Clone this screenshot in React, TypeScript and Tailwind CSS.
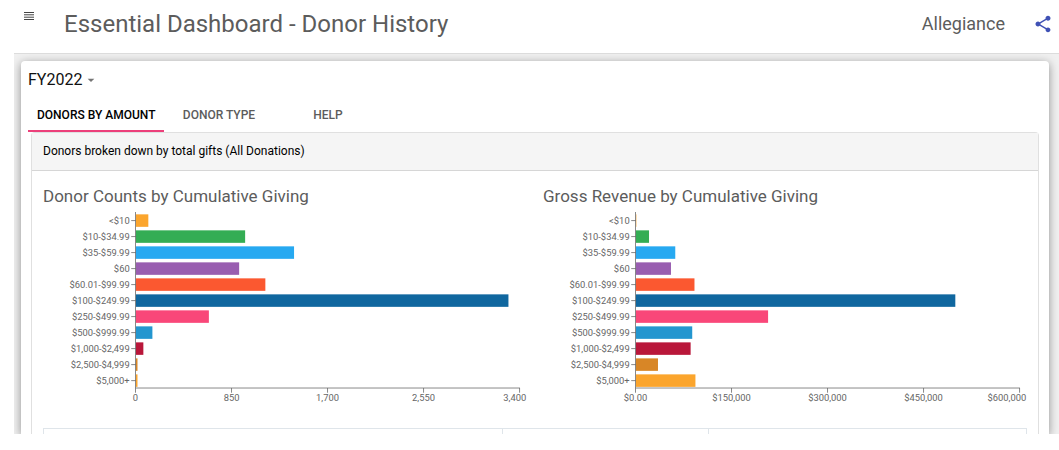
import { useState } from "react";
import { MdArrowDropDown, MdShare } from "react-icons/md";

type Bar = {
  label: string;
  value: number;
  color: string;
};

type BarChartProps = {
  title: string;
  bars: Bar[];
  ticks: string[];
  max: number;
};

const donorCounts: Bar[] = [
  { label: "<$10", value: 110, color: "#fba52d" },
  { label: "$10-$34.99", value: 967, color: "#34ad54" },
  { label: "$35-$59.99", value: 1400, color: "#27a9f1" },
  { label: "$60", value: 914, color: "#995eb0" },
  { label: "$60.01-$99.99", value: 1146, color: "#fb5830" },
  { label: "$100-$249.99", value: 3298, color: "#10679f" },
  { label: "$250-$499.99", value: 646, color: "#f94779" },
  { label: "$500-$999.99", value: 146, color: "#2396cf" },
  { label: "$1,000-$2,499", value: 66, color: "#b9173a" },
  { label: "$2,500-$4,999", value: 14, color: "#d88626" },
  { label: "$5,000+", value: 14, color: "#fba52d" },
];

const grossRevenue: Bar[] = [
  { label: "<$10", value: 700, color: "#fba52d" },
  { label: "$10-$34.99", value: 20500, color: "#34ad54" },
  { label: "$35-$59.99", value: 61500, color: "#27a9f1" },
  { label: "$60", value: 54800, color: "#995eb0" },
  { label: "$60.01-$99.99", value: 91500, color: "#fb5830" },
  { label: "$100-$249.99", value: 499000, color: "#10679f" },
  { label: "$250-$499.99", value: 206500, color: "#f94779" },
  { label: "$500-$999.99", value: 88000, color: "#2396cf" },
  { label: "$1,000-$2,499", value: 85500, color: "#b9173a" },
  { label: "$2,500-$4,999", value: 34500, color: "#d88626" },
  { label: "$5,000+", value: 93000, color: "#fba52d" },
];

const tabs = ["Donors by Amount", "Donor Type", "Help"];

const AXIS_X = 119;
const PLOT_WIDTH = 492;
const ROW = 20.5;

function BarChart({ title, bars, ticks, max }: BarChartProps) {
  const bottom = bars.length * ROW;

  return (
    <section>
      <h2 className="text-[17px] leading-6 text-[#5c5c5c]">{title}</h2>
      <svg
        viewBox="0 0 620 248"
        className="mt-1 block w-full fill-[#666] text-[12px]"
        role="img"
        aria-label={title}
      >
        {bars.map((bar, index) => (
          <g key={bar.label}>
            <text x={AXIS_X - 8} y={index * ROW + 15} textAnchor="end">
              {bar.label}
            </text>
            <path d={`M${AXIS_X - 6} ${index * ROW + 11}h6`} stroke="#666" />
            <rect
              x={AXIS_X}
              y={index * ROW + 3}
              width={(bar.value / max) * PLOT_WIDTH}
              height={16}
              fill={bar.color}
            />
          </g>
        ))}
        <path
          d={`M${AXIS_X - 0.5} 0V${bottom}H${AXIS_X + PLOT_WIDTH}`}
          fill="none"
          stroke="#666"
        />
        {ticks.map((tick, index) => {
          const last = index === ticks.length - 1;
          const x = AXIS_X - 0.5 + (index * PLOT_WIDTH) / (ticks.length - 1);
          return (
            <g key={tick}>
              <path d={`M${x} ${bottom}v6`} stroke="#666" />
              <text
                x={last ? 619 : x}
                y={bottom + 17}
                textAnchor={last ? "end" : "middle"}
              >
                {tick}
              </text>
            </g>
          );
        })}
      </svg>
    </section>
  );
}

function MenuIcon() {
  return (
    <svg width="10" height="8" viewBox="0 0 10 8" stroke="#444">
      <path d="M0 .5h10M0 2.8h10M0 5.2h10M0 7.5h10" />
    </svg>
  );
}

export default function App() {
  const [year, setYear] = useState("FY2022");
  const [activeTab, setActiveTab] = useState(tabs[0]);

  return (
    <div className="bg-white font-[Roboto,sans-serif] text-[#111]">
      <header className="flex h-[53px] items-start pl-6 pr-[6px]">
        <button aria-label="Open menu" className="mt-3">
          <MenuIcon />
        </button>
        <h1 className="ml-[30px] mt-2 text-2xl leading-8 text-[#5c5c5c]">
          Essential Dashboard - Donor History
        </h1>
        <span className="ml-auto mt-3 text-lg leading-6 text-[#5c5c5c]">
          Allegiance
        </span>
        <button aria-label="Share" className="ml-7 mt-[14px] text-[#3f51b5]">
          <MdShare size={20} />
        </button>
      </header>

      <main className="ml-[14px] overflow-hidden border-t border-[#dcdcdc] bg-[#f0f0f0] pl-[7px] pr-[10px] pt-[7px]">
        <div className="rounded-t bg-white px-[7px] pt-[7px] shadow-[0_2px_10px_rgba(0,0,0,0.4)]">
          <div className="relative flex w-fit items-center">
            <select
              aria-label="Fiscal year"
              value={year}
              onChange={(e) => setYear(e.target.value)}
              className="appearance-none bg-transparent pr-4 text-base leading-6"
            >
              <option>FY2022</option>
              <option>FY2021</option>
            </select>
            <MdArrowDropDown
              size={16}
              className="pointer-events-none absolute right-0 text-[#757575]"
            />
          </div>

          <div role="tablist" className="mt-2 flex">
            {tabs.map((tab) => (
              <button
                key={tab}
                role="tab"
                aria-selected={tab === activeTab}
                onClick={() => setActiveTab(tab)}
                className={`h-8 min-w-[109px] border-b-2 px-[9px] text-xs font-medium uppercase ${
                  tab === activeTab
                    ? "border-[#ec407a] text-black"
                    : "border-transparent text-[#5c5c5c]"
                }`}
              >
                {tab}
              </button>
            ))}
          </div>

          <div className="mx-[3px] rounded-t border border-b-0 border-[#e0e0e0]">
            <div className="border-b border-[#d6d6d6] bg-[#f5f5f5] px-[11px] py-2 text-xs leading-[21px] text-black">
              Donors broken down by total gifts (All Donations)
            </div>
            <div className="px-[11px] pt-[13px]">
              <div className="grid grid-cols-2 gap-4">
                <BarChart
                  title="Donor Counts by Cumulative Giving"
                  bars={donorCounts}
                  ticks={["0", "850", "1,700", "2,550", "3,400"]}
                  max={3400}
                />
                <BarChart
                  title="Gross Revenue by Cumulative Giving"
                  bars={grossRevenue}
                  ticks={["$0.00", "$150,000", "$300,000", "$450,000", "$600,000"]}
                  max={600000}
                />
              </div>
              <table className="mt-[22px] w-full table-fixed border-collapse border border-b-0 border-[#dfe5ea]">
                <tbody>
                  <tr className="h-[6px]">
                    <td className="w-7/15 border-r border-[#dfe5ea] p-0" />
                    <td className="w-[21%] border-r border-[#dfe5ea] p-0" />
                    <td className="p-0" />
                  </tr>
                </tbody>
              </table>
            </div>
          </div>
        </div>
      </main>
    </div>
  );
}
